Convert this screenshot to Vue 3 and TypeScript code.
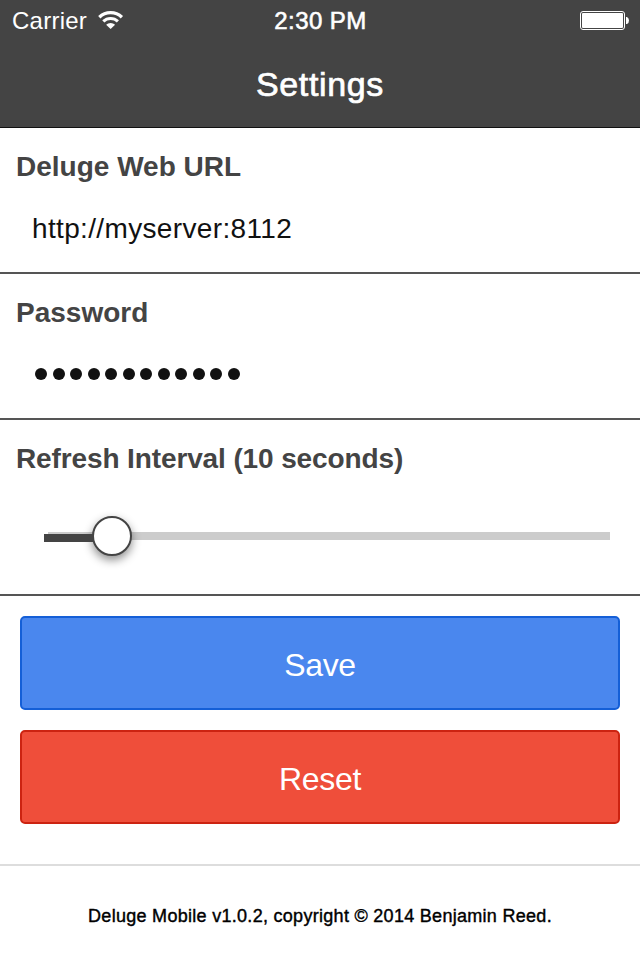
<script setup lang="ts">
import { ref } from 'vue'

const url = ref<string>('http://myserver:8112')
const passwordLength = 12
const refreshSeconds = ref<number>(10)
</script>

<template>
  <main class="screen">
    <header class="top">
      <div class="status">
        <div class="carrier">
          <span class="carrier-name">Carrier</span>
          <svg class="wifi" width="26" height="20" viewBox="0 0 26 20">
            <path d="M1.3 7.2a16.5 16.5 0 0 1 22.6 0" fill="none" stroke="#fff" stroke-width="3.3" />
            <path d="M5.3 11.4a10.6 10.6 0 0 1 14.6 0" fill="none" stroke="#fff" stroke-width="3.1" />
            <path d="M8.1 14.7a6.6 6.6 0 0 1 9 0L12.6 19.1z" fill="#fff" />
          </svg>
        </div>
        <span class="time">2:30 PM</span>
        <svg class="battery" width="50" height="20" viewBox="0 0 50 20">
          <rect x=".5" y=".5" width="44" height="18" rx="2.5" fill="none" stroke="#fff" />
          <rect x="2" y="2" width="41" height="15" rx="1" fill="#fff" />
          <path d="M46 6h1q2 1 2 3.5T47 13h-1z" fill="#fff" />
        </svg>
      </div>
      <h1 class="title">Settings</h1>
    </header>

    <section class="row">
      <h2 class="label">Deluge Web URL</h2>
      <div class="value">{{ url }}</div>
    </section>
    <section class="row">
      <h2 class="label">Password</h2>
      <div class="dots"><i v-for="n in passwordLength" :key="n" class="dot"></i></div>
    </section>
    <section class="row interval">
      <h2 class="label interval-label">Refresh Interval ({{ refreshSeconds }} seconds)</h2>
      <div class="slider">
        <div class="track"></div>
        <div class="thumb"></div>
        <div class="fill"></div>
      </div>
    </section>

    <div class="actions">
      <button class="button save">Save</button>
      <button class="button reset">Reset</button>
    </div>
    <footer class="footer"><span>Deluge Mobile v1.0.2, copyright © 2014 Benjamin Reed.</span></footer>
  </main>
</template>

<style>
body {
  background: #fff;
}
</style>

<style scoped>
.screen {
  width: 640px;
  height: 960px;
  overflow: hidden;
  background: #fff;
  font-family: "Liberation Sans", Arial, sans-serif;
}
.top {
  box-sizing: border-box;
  height: 128px;
  background: #444;
  border-bottom: 1px solid #111;
  color: #fff;
}
.status {
  display: grid;
  grid-template-columns: 1fr auto 1fr;
  height: 40px;
  line-height: 42px;
  font-size: 24px;
}
.carrier {
  display: flex;
  padding-left: 12px;
}
.carrier-name {
  width: 86px;
  letter-spacing: 0.25px;
}
.wifi {
  margin-top: 10px;
}
.time {
  padding-left: 1px;
  letter-spacing: 0.45px;
  -webkit-text-stroke: 0.6px #fff;
}
.battery {
  justify-self: end;
  margin: 11px 10px 0 0;
}
.title {
  margin: 0;
  padding-top: 19px;
  text-align: center;
  font-size: 34px;
  line-height: 50px;
  font-weight: 400;
  letter-spacing: 0.65px;
  -webkit-text-stroke: 0.7px #fff;
}
.row {
  box-sizing: border-box;
  height: 146px;
  padding: 20px 16px 0;
  border-bottom: 2px solid #555;
}
.interval {
  height: 176px;
}
.label {
  margin: 0;
  font-size: 28px;
  line-height: 38px;
  font-weight: 700;
  color: #444;
}
.interval-label {
  letter-spacing: -0.12px;
}
.value {
  padding: 23px 16px 0;
  font-size: 28px;
  line-height: 40px;
  letter-spacing: 0.35px;
  color: #111;
}
.dots {
  display: flex;
  gap: 5.5px;
  padding: 36px 0 0 19px;
}
.dot {
  width: 12px;
  height: 12px;
  border-radius: 50%;
  background: #111;
}
.slider {
  position: relative;
  height: 40px;
  margin: 38px 14px 0 28px;
}
.track {
  position: absolute;
  top: 16px;
  left: 4px;
  right: 0;
  height: 8px;
  background: #ccc;
}
.fill {
  position: absolute;
  top: 18px;
  left: 0;
  width: 49px;
  height: 8px;
  background: #444;
}
.thumb {
  position: absolute;
  box-sizing: border-box;
  top: 0;
  left: 48px;
  width: 40px;
  height: 40px;
  border: 2px solid #444;
  border-radius: 50%;
  background: #fff;
  box-shadow: 0 4px 10px rgba(0, 0, 0, 0.45);
}
.actions {
  display: flex;
  flex-direction: column;
  gap: 20px;
  padding: 20px 20px 40px;
}
.button {
  box-sizing: border-box;
  height: 94px;
  padding: 5px 0 0;
  border: 2px solid;
  border-radius: 5px;
  color: #fff;
  font-family: inherit;
  font-size: 32px;
  letter-spacing: -0.3px;
}
.save {
  background: #4a87ee;
  border-color: #145fd7;
}
.reset {
  background: #ef4e3a;
  border-color: #cc2311;
}
.footer {
  border-top: 2px solid #ddd;
  padding-top: 34px;
  text-align: center;
  font-size: 18px;
  line-height: 32px;
  letter-spacing: 0.29px;
  color: #000;
  -webkit-text-stroke: 0.4px #000;
}
</style>
